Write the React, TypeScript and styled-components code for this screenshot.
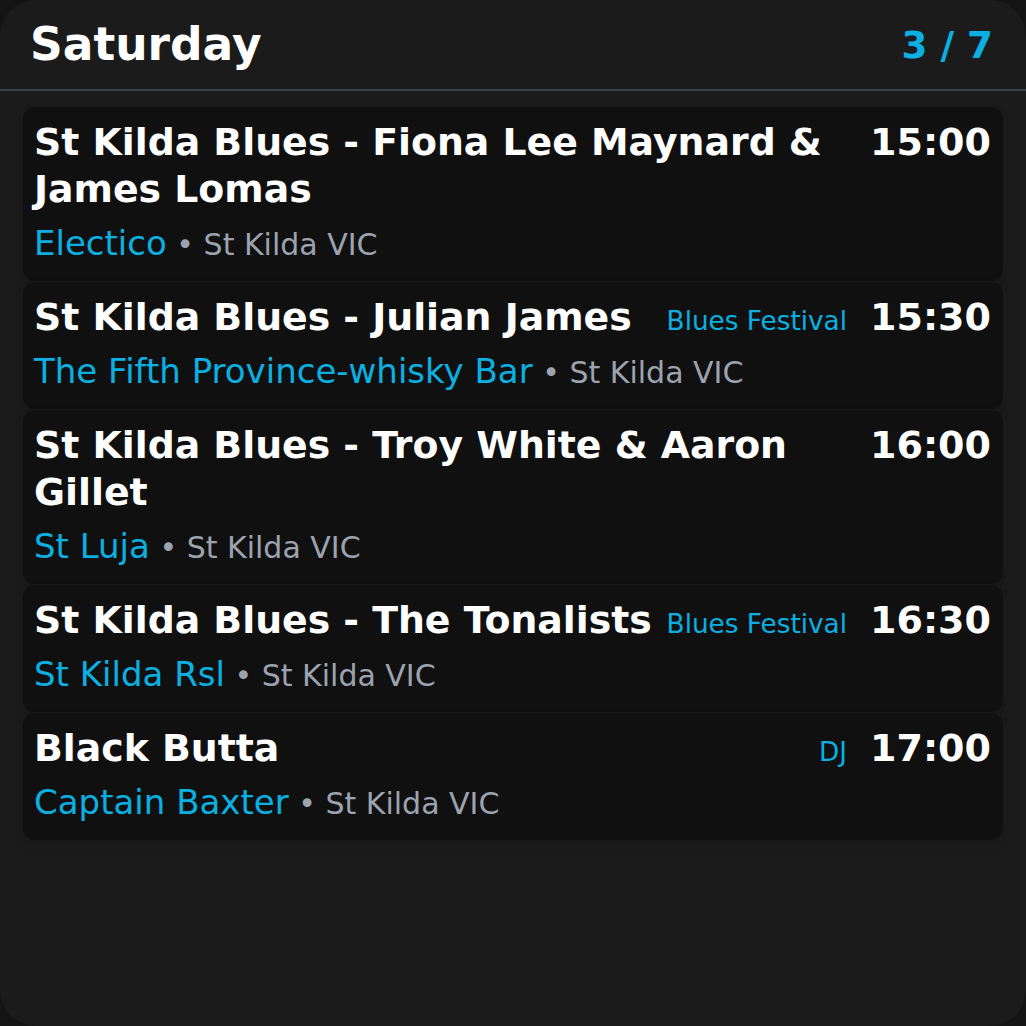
import * as React from 'react';
import styled, { createGlobalStyle } from 'styled-components';

const GlobalStyle = createGlobalStyle`
  html, body {
    margin: 0;
    padding: 0;
    background: #141414;
  }
  body {
    font-family: "DejaVu Sans", "Noto Sans", sans-serif;
  }
`;

interface IEvent {
  title: string;
  venue: string;
  location: string;
  time: string;
  tag?: string;
}

const events: IEvent[] = [
  { title: 'St Kilda Blues - Fiona Lee Maynard & James Lomas', venue: 'Electico', location: 'St Kilda VIC', time: '15:00' },
  { title: 'St Kilda Blues - Julian James', venue: 'The Fifth Province-whisky Bar', location: 'St Kilda VIC', time: '15:30', tag: 'Blues Festival' },
  { title: 'St Kilda Blues - Troy White & Aaron Gillet', venue: 'St Luja', location: 'St Kilda VIC', time: '16:00' },
  { title: 'St Kilda Blues - The Tonalists', venue: 'St Kilda Rsl', location: 'St Kilda VIC', time: '16:30', tag: 'Blues Festival' },
  { title: 'Black Butta', venue: 'Captain Baxter', location: 'St Kilda VIC', time: '17:00', tag: 'DJ' },
];

// <Panel>
const Panel = styled.div`
  width: 1026px;
  height: 1026px;
  box-sizing: border-box;
  background: #1b1b1b;
  border-radius: 36px;
  overflow: hidden;
`;

const Header = styled.header`
  display: flex;
  align-items: center;
  justify-content: space-between;
  height: 91px;
  padding: 1px 33px 0 30px;
  box-sizing: border-box;
  border-bottom: 2px solid #3a3f4a;
`;

const Day = styled.h1`
  margin: 0;
  color: #fff;
  font-size: 45.5px;
  font-weight: 700;
  line-height: 1.2;
`;

const Counter = styled.span`
  color: #0bb0e2;
  font-size: 37.3px;
  font-weight: 700;
  line-height: 1.2;
`;
// </Panel>

// <EventList>
const List = styled.div`
  display: flex;
  flex-direction: column;
  gap: 1px;
  padding: 16px 23px 0;
`;

const Card = styled.div`
  background: #101010;
  border-radius: 12px;
  padding: 12px 12px 11px 11px;
  box-shadow: 0 6px 14px rgba(0, 0, 0, 0.12);
`;

const TopRow = styled.div`
  display: flex;
  align-items: baseline;
  gap: 10px;
`;

const Title = styled.div`
  flex: 1;
  color: #fff;
  font-size: 37.8px;
  font-weight: 700;
  line-height: 47px;
`;

const Meta = styled.div`
  display: flex;
  align-items: baseline;
  gap: 23px;
  white-space: nowrap;
`;

const Tag = styled.span`
  color: #0bb0e2;
  font-size: 26.3px;
`;

const Time = styled.span`
  color: #fff;
  font-size: 38px;
  font-weight: 700;
  line-height: 47px;
`;

const Where = styled.div`
  margin-top: 10px;
  line-height: 40px;
  white-space: nowrap;
`;

const Venue = styled.span`
  color: #0bb0e2;
  font-size: 34px;
`;

const Location = styled.span`
  color: #9ca3af;
  font-size: 30px;
`;
// </EventList>

const EventCard: React.FunctionComponent<{ event: IEvent }> = ({ event }) => (
  <Card>
    <TopRow>
      <Title>{event.title}</Title>
      <Meta>
        {event.tag && <Tag>{event.tag}</Tag>}
        <Time>{event.time}</Time>
      </Meta>
    </TopRow>
    <Where>
      <Venue>{event.venue}</Venue>
      <Location> • {event.location}</Location>
    </Where>
  </Card>
);

export default function App() {
  return (
    <>
      <GlobalStyle />
      <Panel>
        <Header>
          <Day>Saturday</Day>
          <Counter>3 / 7</Counter>
        </Header>
        <List>
          {events.map((event, idx) => (
            <EventCard key={idx} event={event} />
          ))}
        </List>
      </Panel>
    </>
  );
}
